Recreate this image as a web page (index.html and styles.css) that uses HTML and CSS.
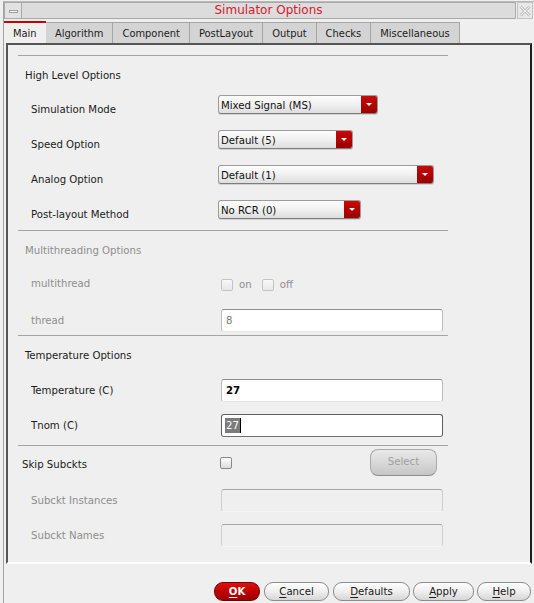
FILE: index.html
```html
<!DOCTYPE html>
<html>
<head>
<meta charset="utf-8">
<title>Simulator Options</title>
<link rel="stylesheet" href="styles.css">
</head>
<body>
<div class="window">
  <div class="titlebar">
    <div class="tb-min"><span class="dash"></span></div>
    <div class="tb-title">Simulator Options</div>
    <div class="tb-close">
      <svg width="12" height="12" viewBox="0 0 12 12">
        <path d="M1.5 1.5 L10.5 10.5 M10.5 1.5 L1.5 10.5" stroke="#c4c4c4" stroke-width="3" fill="none"/>
        <path d="M1.5 1.5 L10.5 10.5 M10.5 1.5 L1.5 10.5" stroke="#f2f2f2" stroke-width="1" fill="none"/>
      </svg>
    </div>
  </div>

  <div class="tabs">
    <div class="tab active">Main</div>
    <div class="tab">Algorithm</div>
    <div class="tab">Component</div>
    <div class="tab">PostLayout</div>
    <div class="tab">Output</div>
    <div class="tab">Checks</div>
    <div class="tab">Miscellaneous</div>
  </div>

  <div class="panel">
    <div class="section sec-high">
      <div class="sec-title">High Level Options</div>
      <div class="dd-rows">
        <div class="dd-row">
          <span class="label">Simulation Mode</span>
          <div class="combo combo-mode"><span class="combo-text">Mixed Signal (MS)</span><span class="combo-arrow"></span></div>
        </div>
        <div class="dd-row">
          <span class="label">Speed Option</span>
          <div class="combo combo-speed"><span class="combo-text">Default (5)</span><span class="combo-arrow"></span></div>
        </div>
        <div class="dd-row">
          <span class="label">Analog Option</span>
          <div class="combo combo-analog"><span class="combo-text">Default (1)</span><span class="combo-arrow"></span></div>
        </div>
        <div class="dd-row">
          <span class="label">Post-layout Method</span>
          <div class="combo combo-post"><span class="combo-text">No RCR (0)</span><span class="combo-arrow"></span></div>
        </div>
      </div>
    </div>

    <div class="section sec-multi disabled">
      <div class="sec-title">Multithreading Options</div>
      <div class="row row-check">
        <span class="label">multithread</span>
        <div class="checks">
          <label class="check"><span class="box"></span><span>on</span></label>
          <label class="check"><span class="box"></span><span>off</span></label>
        </div>
      </div>
      <div class="row row-input row-thread">
        <span class="label">thread</span>
        <div class="field field-dim">8</div>
      </div>
    </div>

    <div class="section sec-temp">
      <div class="sec-title">Temperature Options</div>
      <div class="row row-input row-temp">
        <span class="label">Temperature (C)</span>
        <div class="field field-value">27</div>
      </div>
      <div class="row row-input row-tnom">
        <span class="label">Tnom (C)</span>
        <div class="field field-focus"><span class="sel">27</span><span class="caret"></span></div>
      </div>
    </div>

    <div class="section sec-skip">
      <div class="row row-skip">
        <span class="label label-skip">Skip Subckts</span>
        <span class="box box-on"></span>
        <div class="btn-select">Select</div>
      </div>
      <div class="row row-input row-inst disabled">
        <span class="label">Subckt Instances</span>
        <div class="field field-off"></div>
      </div>
      <div class="row row-input row-names disabled">
        <span class="label">Subckt Names</span>
        <div class="field field-off"></div>
      </div>
    </div>
  </div>

  <div class="buttons">
    <div class="btn btn-ok"><u>O</u>K</div>
    <div class="btn btn-cancel"><u>C</u>ancel</div>
    <div class="btn btn-defaults"><u>D</u>efaults</div>
    <div class="btn btn-apply"><u>A</u>pply</div>
    <div class="btn btn-help"><u>H</u>elp</div>
  </div>
</div>
</body>
</html>
```

FILE: styles.css
```css
* { box-sizing: border-box; }

html, body {
  margin: 0;
  padding: 0;
}

body {
  width: 534px;
  height: 603px;
  overflow: hidden;
  background: #efefef;
  font-family: "DejaVu Sans Condensed", "DejaVu Sans", sans-serif;
  font-stretch: condensed;
  font-size: 11.3px;
  line-height: 13px;
  color: #1c1c1c;
}

.window {
  margin: 1px 0 0 3px;
  height: 602px;
  border-left: 1px solid #a4a4a4;
  border-top: 1px solid #b8b8b8;
}

/* ---------- title bar ---------- */
.titlebar {
  display: flex;
  height: 17px;
}

.tb-min {
  width: 18px;
  border: 1px solid #a9a9a9;
  background: #e2e2e2;
  display: flex;
  align-items: center;
  justify-content: center;
}

.tb-min .dash {
  display: block;
  width: 9px;
  height: 3px;
  margin-top: 1px;
  border: 1px solid #a0a0a0;
  background: #f4f4f4;
}

.tb-title {
  flex: 1;
  border: 1px solid #a9a9a9;
  border-left: none;
  background: #dcdcdc;
  color: #d4202c;
  font-family: "DejaVu Sans", sans-serif;
  font-stretch: normal;
  font-size: 12px;
  line-height: 15px;
  text-align: center;
}

.tb-close {
  width: 16px;
  margin-left: 1px;
  margin-right: 1px;
  border: 1px solid #c2c2c2;
  background: #e8e8e8;
  display: flex;
  align-items: center;
  justify-content: center;
}

/* ---------- tabs ---------- */
.tabs {
  display: flex;
  align-items: flex-end;
  height: 22px;
  margin-top: 2px;
  font-size: 11px;
}

.tab {
  height: 21px;
  padding: 1px 9px 0;
  border: 1px solid #a6a6a6;
  border-bottom: none;
  border-left: none;
  background: #d4d4d4;
  line-height: 20px;
  white-space: nowrap;
}

.tab.active {
  height: 22px;
  width: 42px;
  padding: 0 9px;
  border: none;
  border-top: 2px solid #c80000;
  background: #efefef;
  line-height: 21px;
}

/* ---------- panel ---------- */
.panel {
  margin-left: 2px;
  width: 526px;
  border-top: 2px solid #555555;
  border-left: 2px solid #555555;
  border-right: 2px solid #1e1e1e;
  border-bottom: 2px solid #fdfdfd;
  padding: 10px 0 0 10px;
}

.section {
  width: 430px;
  border-top: 1px solid #a4a4a4;
}

.sec-title {
  margin-top: 13px;
  padding-left: 7px;
}

.disabled,
.disabled .label {
  color: #8e8e8e;
}

.label {
  display: block;
  flex: none;
  width: 200px;
  padding-left: 13px;
  white-space: nowrap;
}

/* High level options */
.sec-high { padding-bottom: 11px; }

.dd-rows {
  display: flex;
  flex-direction: column;
  gap: 16px;
  margin-top: 13px;
}

.dd-row {
  display: flex;
  height: 19px;
}

.dd-row .label { padding-top: 8px; }

.combo {
  display: flex;
  height: 19px;
  border: 1px solid #9c9c9c;
  border-bottom-color: #7d7d7d;
  border-radius: 3px;
  background: linear-gradient(#fdfdfd, #f2f2f2 45%, #dedede);
  box-shadow: 0 1px 0 rgba(0, 0, 0, 0.12);
  overflow: hidden;
}

.combo-mode { width: 160px; }
.combo-speed { width: 135px; }
.combo-analog { width: 216px; }
.combo-post { width: 143px; }

.combo-text {
  flex: 1;
  padding: 2px 0 0 2px;
  line-height: 16px;
  color: #111;
  white-space: nowrap;
}

.combo-arrow {
  position: relative;
  width: 16px;
  background: linear-gradient(#c80a0a, #b00000 55%, #980000);
}

.combo-arrow::after {
  content: "";
  position: absolute;
  left: 5px;
  top: 7px;
  border-left: 3px solid transparent;
  border-right: 3px solid transparent;
  border-top: 3px solid #ffffff;
}

/* Multithreading */
.sec-multi { padding-bottom: 3px; }

.row {
  display: flex;
  align-items: center;
}

.row-check {
  height: 12px;
  margin-top: 21px;
}

.row-check .label { margin-top: -2px; }

.checks {
  display: flex;
  margin-left: 3px;
  gap: 10px;
}

.check {
  display: flex;
  align-items: center;
  gap: 6px;
  margin-top: 1px;
}

.box {
  display: block;
  width: 12px;
  height: 12px;
  border: 1px solid #c4c4c4;
  border-radius: 2px;
  background: linear-gradient(#f8f8f8, #e8e8e8);
}

.box-on {
  margin-left: 1px;
  border-color: #8a8a8a;
  background: linear-gradient(#ffffff, #dcdcdc);
}

.row-input { height: 23px; }

.row-thread { margin-top: 19px; }

.field {
  width: 222px;
  height: 23px;
  margin-left: 3px;
  padding-left: 4px;
  border: 1px solid #bdbdbd;
  border-top-color: #8f8f8f;
  border-bottom-color: #e4e4e4;
  border-radius: 3px;
  background: #ffffff;
  color: #000;
  line-height: 21px;
  display: flex;
  align-items: center;
}

.field-dim { color: #7a7a7a; }

.field-value { font-weight: bold; }

.field-focus {
  border: 1px solid #5e5e5e;
  border-bottom-color: #707070;
}

.sel {
  display: block;
  height: 15px;
  line-height: 15px;
  padding: 0 1px;
  margin-left: -1px;
  background: #7c7c7c;
  color: #ffffff;
}

.caret {
  display: block;
  width: 1px;
  height: 15px;
  background: #000;
}

.field-off {
  background: #efefef;
  border-color: #cfcfcf;
  border-top-color: #a8a8a8;
  border-bottom-color: #f6f6f6;
}

/* Temperature */
.sec-temp { padding-bottom: 8px; }
.row-temp { margin-top: 17px; }
.row-tnom { margin-top: 12px; }

/* Skip subckts */
.sec-skip { padding-bottom: 15px; }

.row-skip {
  height: 27px;
  margin-top: 3px;
}

.label-skip {
  width: 201px;
  padding-left: 4px;
  padding-top: 3px;
}

.btn-select {
  width: 67px;
  height: 27px;
  margin-left: 138px;
  border: 1px solid #a9a9a9;
  border-bottom-color: #8e8e8e;
  border-radius: 8px;
  background: linear-gradient(#e9e9e9, #d8d8d8 50%, #c6c6c6);
  color: #a0a0a0;
  text-align: center;
  line-height: 24px;
}

.row-inst { margin-top: 13px; }
.row-names { margin-top: 12px; }

/* ---------- bottom buttons ---------- */
.buttons {
  display: flex;
  justify-content: flex-end;
  gap: 3px;
  margin-top: 18px;
  padding-right: 3px;
}

.btn {
  height: 19px;
  border: 1px solid #8c8c8c;
  border-radius: 9px;
  background: linear-gradient(#fefefe, #efefef 50%, #d6d6d6);
  text-align: center;
  line-height: 17px;
  color: #1a1a1a;
}

.btn u { text-decoration-thickness: 1px; text-underline-offset: 2px; }

.btn-ok {
  width: 46px;
  margin-right: 1px;
  border-color: #7a0000;
  background: linear-gradient(#e01010, #c00000 50%, #9a0000);
  color: #ffffff;
  font-weight: bold;
}

.btn-cancel { width: 65px; margin-right: 1px; }
.btn-defaults { width: 77px; }
.btn-apply { width: 61px; }
.btn-help { width: 54px; }
```
